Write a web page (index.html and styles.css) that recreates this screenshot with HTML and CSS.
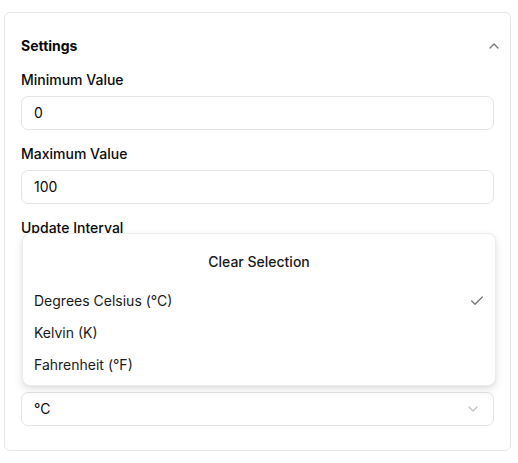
FILE: index.html
```html
<!DOCTYPE html>
<html lang="en">
<head>
<meta charset="utf-8">
<link rel="stylesheet" href="styles.css">
</head>
<body>
<div class="card">
  <div class="header">
    <span class="title">Settings</span>
    <svg class="chev-up" width="16" height="16" viewBox="0 0 24 24" fill="none" stroke="currentColor" stroke-width="2" stroke-linecap="round" stroke-linejoin="round"><path d="m18 15-6-6-6 6"/></svg>
  </div>
  <div class="fields">
    <div class="field">
      <label class="label">Minimum Value</label>
      <div class="input">0</div>
    </div>
    <div class="field">
      <label class="label">Maximum Value</label>
      <div class="input">100</div>
    </div>
    <div class="field">
      <label class="label">Update Interval</label>
      <div class="covered"></div>
    </div>
    <div class="field">
      <div class="input select">
        <span>°C</span>
        <svg class="chev-down" width="16" height="16" viewBox="0 0 24 24" fill="none" stroke="currentColor" stroke-width="2" stroke-linecap="round" stroke-linejoin="round"><path d="m6 9 6 6 6-6"/></svg>
      </div>
    </div>
  </div>
  <div class="popover">
    <div class="clear">Clear Selection</div>
    <div class="option"><span>Degrees Celsius (°C)</span>
      <svg class="check" width="16" height="16" viewBox="0 0 24 24" fill="none" stroke="currentColor" stroke-width="2" stroke-linecap="round" stroke-linejoin="round"><path d="M20 6 9 17l-5-5"/></svg>
    </div>
    <div class="option"><span>Kelvin (K)</span></div>
    <div class="option"><span>Fahrenheit (°F)</span></div>
  </div>
</div>
</body>
</html>
```
FILE: styles.css
```css
html, body {
  margin: 0;
  background: #ffffff;
}
body {
  padding: 12px 8px 12px 4px;
  font-family: Inter, "Noto Sans", sans-serif;
  font-size: 14px;
  line-height: 20px;
  color: #0a0a0a;
}
.card {
  position: relative;
  width: 507px;
  box-sizing: border-box;
  border: 1px solid #e6e6e6;
  border-radius: 6px;
  padding: 23px 16px 24px 16px;
}
.header {
  display: flex;
  align-items: center;
  justify-content: space-between;
  height: 20px;
  margin-right: -8px;
  margin-bottom: 14px;
}
.title {
  font-weight: 700;
}
.chev-up {
  color: #777;
  display: block;
}
.fields {
  display: flex;
  flex-direction: column;
  gap: 14px;
}
.field {
  display: flex;
  flex-direction: column;
  gap: 6px;
}
.label {
  font-weight: 500;
  height: 20px;
}
.covered {
  height: 134px;
}
.input {
  height: 34px;
  box-sizing: border-box;
  border: 1px solid #e4e4e4;
  border-radius: 7px;
  padding: 0 12px;
  display: flex;
  align-items: center;
}
.select {
  justify-content: space-between;
  padding-right: 12px;
}
.chev-down {
  color: #c4c4c4;
  display: block;
}
.popover {
  position: absolute;
  left: 17px;
  top: 220px;
  width: 474px;
  height: 153px;
  box-sizing: border-box;
  background: #fff;
  border: 1px solid #ececec;
  border-radius: 8px;
  box-shadow: 0 4px 10px rgba(0, 0, 0, 0.10), 0 1px 3px rgba(0, 0, 0, 0.06);
  padding: 4px 0;
  z-index: 2;
}
.clear {
  height: 47px;
  display: flex;
  align-items: center;
  justify-content: center;
  font-weight: 500;
  color: #1a1a1a;
}
.option {
  height: 32px;
  display: flex;
  align-items: center;
  justify-content: space-between;
  padding: 0 10px 0 11px;
  color: #1a1a1a;
}
.check {
  color: #777;
  display: block;
}
```
